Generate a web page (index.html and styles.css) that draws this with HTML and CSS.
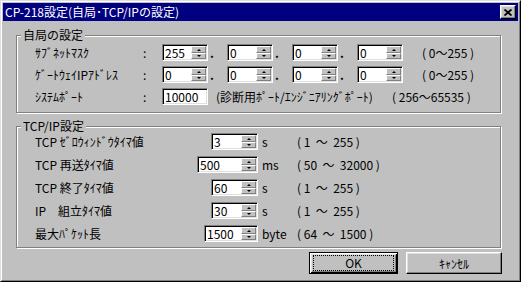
FILE: index.html
```html
<!DOCTYPE html>
<html lang="ja">
<head>
  <meta charset="UTF-8">
  <title>CP-218設定</title>
  <link rel="stylesheet" href="styles.css">
</head>
<body>
  <div class="window">
    <div class="frame">
      <div class="titlebar">
        <span class="title">CP-218設定(自局･TCP/IPの設定)</span>
        <button class="close" aria-label="閉じる">
          <svg width="8" height="7" viewBox="0 0 8 7">
            <path d="M0.5 0.5 L7.5 6.5 M7.5 0.5 L0.5 6.5" stroke="#000" stroke-width="1.8" fill="none"/>
          </svg>
        </button>
      </div>

      <div class="content">
        <fieldset class="group local">
          <legend>自局の設定</legend>
          <div class="rows">
            <div class="row">
              <span class="label">ｻﾌﾞﾈｯﾄﾏｽｸ</span>
              <span class="colon">:</span>
              <div class="ip">
                <div class="spin"><input type="text" value="255"><span class="arrows"><i class="up"></i><i class="down"></i></span></div>
                <span class="dot">.</span>
                <div class="spin"><input type="text" value="0"><span class="arrows"><i class="up"></i><i class="down"></i></span></div>
                <span class="dot">.</span>
                <div class="spin"><input type="text" value="0"><span class="arrows"><i class="up"></i><i class="down"></i></span></div>
                <span class="dot">.</span>
                <div class="spin"><input type="text" value="0"><span class="arrows"><i class="up"></i><i class="down"></i></span></div>
              </div>
              <span class="range ip-range">( 0～255 )</span>
            </div>
            <div class="row">
              <span class="label">ｹﾞｰﾄｳｪｲIPｱﾄﾞﾚｽ</span>
              <span class="colon">:</span>
              <div class="ip">
                <div class="spin"><input type="text" value="0"><span class="arrows"><i class="up"></i><i class="down"></i></span></div>
                <span class="dot">.</span>
                <div class="spin"><input type="text" value="0"><span class="arrows"><i class="up"></i><i class="down"></i></span></div>
                <span class="dot">.</span>
                <div class="spin"><input type="text" value="0"><span class="arrows"><i class="up"></i><i class="down"></i></span></div>
                <span class="dot">.</span>
                <div class="spin"><input type="text" value="0"><span class="arrows"><i class="up"></i><i class="down"></i></span></div>
              </div>
              <span class="range ip-range">( 0～255 )</span>
            </div>
            <div class="row">
              <span class="label">ｼｽﾃﾑﾎﾟｰﾄ</span>
              <span class="colon">:</span>
              <div class="spin"><input type="text" value="10000"></div>
              <span class="note">(診断用ﾎﾟｰﾄ/ｴﾝｼﾞﾆｱﾘﾝｸﾞﾎﾟｰﾄ)</span>
              <span class="range">( 256～65535 )</span>
            </div>
          </div>
        </fieldset>

        <fieldset class="group tcp">
          <legend>TCP/IP設定</legend>
          <div class="rows">
            <div class="row">
              <div class="main">
                <span>TCP ｾﾞﾛｳｨﾝﾄﾞｳﾀｲﾏ値</span>
                <div class="spin w47"><input type="text" value="3"><span class="arrows"><i class="up"></i><i class="down"></i></span></div>
              </div>
              <span class="unit">s</span>
              <span class="range">( 1  ～  255 )</span>
            </div>
            <div class="row">
              <div class="main">
                <span>TCP 再送ﾀｲﾏ値</span>
                <div class="spin w61"><input type="text" value="500"><span class="arrows"><i class="up"></i><i class="down"></i></span></div>
              </div>
              <span class="unit">ms</span>
              <span class="range">( 50  ～  32000 )</span>
            </div>
            <div class="row">
              <div class="main">
                <span>TCP 終了ﾀｲﾏ値</span>
                <div class="spin w47"><input type="text" value="60"><span class="arrows"><i class="up"></i><i class="down"></i></span></div>
              </div>
              <span class="unit">s</span>
              <span class="range">( 1  ～  255 )</span>
            </div>
            <div class="row">
              <div class="main">
                <span>IP　組立ﾀｲﾏ値</span>
                <div class="spin w47"><input type="text" value="30"><span class="arrows"><i class="up"></i><i class="down"></i></span></div>
              </div>
              <span class="unit">s</span>
              <span class="range">( 1  ～  255 )</span>
            </div>
            <div class="row">
              <div class="main">
                <span>最大ﾊﾟｹｯﾄ長</span>
                <div class="spin w54"><input type="text" value="1500"><span class="arrows"><i class="up"></i><i class="down"></i></span></div>
              </div>
              <span class="unit">byte</span>
              <span class="range">( 64  ～  1500 )</span>
            </div>
          </div>
        </fieldset>

        <div class="buttons">
          <button class="btn ok"><span class="focus">OK</span></button>
          <button class="btn cancel">ｷｬﾝｾﾙ</button>
        </div>
      </div>
    </div>
  </div>
</body>
</html>
```

FILE: styles.css
```css
body {
  margin: 0;
  font-family: "Noto Sans CJK JP", "Noto Sans", sans-serif;
  font-size: 12px;
  color: #000;
}
.window {
  width: 521px;
  height: 282px;
  box-sizing: border-box;
  border: 1px solid;
  border-color: #dfdfdf #000 #000 #dfdfdf;
  background: #c0c0c0;
}
.frame {
  height: 100%;
  box-sizing: border-box;
  border: 1px solid;
  border-color: #fff #808080 #808080 #fff;
  padding: 1px;
}

/* title bar */
.titlebar {
  height: 18px;
  background: #000080;
  color: #fff;
  display: flex;
  align-items: center;
  justify-content: space-between;
  padding: 0 2px;
}
.title { line-height: 12px; }
.close {
  width: 16px;
  height: 14px;
  padding: 0;
  background: #c0c0c0;
  border: 1px solid;
  border-color: #fff #000 #000 #fff;
  box-shadow: inset -1px -1px #808080, inset 1px 1px #dfdfdf;
  display: flex;
  align-items: center;
  justify-content: center;
}

.content { padding: 8px 17px 0 13px; }

/* group boxes */
.group {
  margin: 0;
  min-inline-size: 0;
  border: 1px solid #808080;
  box-shadow: inset 1px 1px #fff, 1px 1px #fff;
  padding: 3px 0 7px 4px;
}
.group legend {
  padding: 0 2px;
  line-height: 12px;
  background: #c0c0c0;
}
.group.tcp {
  margin-top: 7px;
  padding: 1px 0 5px 4px;
}
.rows {
  padding-left: 14px;
  display: flex;
  flex-direction: column;
  gap: 5px;
}
.tcp .rows { gap: 6px; }
.row {
  display: flex;
  align-items: center;
  height: 17px;
  white-space: nowrap;
}
.label { width: 108px; }
.colon { width: 19px; }
.range { white-space: pre; }

/* spin edit */
.spin {
  width: 46px;
  height: 17px;
  box-sizing: border-box;
  border: 1px solid;
  border-color: #808080 #fff #fff #808080;
  box-shadow: inset 1px 1px #000, inset -1px -1px #dfdfdf;
  padding: 1px;
  background: #fff;
  display: flex;
}
.spin input {
  flex: 1;
  min-width: 0;
  border: none;
  outline: none;
  padding: 0 0 0 1px;
  margin: 0;
  height: 13px;
  font: inherit;
  line-height: 13px;
  background: #fff;
}
.arrows {
  width: 15px;
  display: flex;
  flex-direction: column;
}
.arrows i {
  box-sizing: border-box;
  background: #c0c0c0;
  border: 1px solid;
  border-color: #fff #808080 #808080 #fff;
  display: flex;
  align-items: center;
  justify-content: center;
}
.arrows .up { height: 7px; }
.arrows .down { flex: 1; }
.arrows i::after {
  content: "";
  border-left: 2px solid transparent;
  border-right: 2px solid transparent;
}
.arrows .up::after { border-bottom: 2px solid #000; }
.arrows .down::after { border-top: 2px solid #000; }

.w47 { width: 47px; }
.w54 { width: 54px; }
.w61 { width: 61px; }

.ip {
  display: flex;
  align-items: center;
}
.dot {
  width: 19px;
  box-sizing: border-box;
  padding-left: 2px;
  font-weight: bold;
}
.ip-range { margin-left: 19px; }
.note {
  margin-left: 8px;
  width: 176px;
}

/* tcp rows */
.main {
  width: 223px;
  display: flex;
  align-items: center;
  justify-content: space-between;
}
.unit {
  width: 39px;
  box-sizing: border-box;
  padding-left: 4px;
}

/* buttons */
.buttons {
  display: flex;
  justify-content: flex-end;
  gap: 8px;
  margin-top: 4px;
  margin-right: -1px;
}
.btn {
  height: 22px;
  padding: 0;
  font: inherit;
  color: #000;
  background: #c0c0c0;
  border: 1px solid;
  border-color: #fff #000 #000 #fff;
  box-shadow: inset -1px -1px #808080, inset 1px 1px #dfdfdf;
}
.ok {
  width: 89px;
  border-color: #000;
  box-shadow: inset 1px 1px #fff, inset -1px -1px #000, inset 2px 2px #dfdfdf, inset -2px -2px #808080;
  display: flex;
  align-items: center;
}
.focus {
  flex: 1;
  margin: 0 3px;
  height: 14px;
  line-height: 14px;
  border: 1px dotted #000;
}
.cancel { width: 96px; }
```
